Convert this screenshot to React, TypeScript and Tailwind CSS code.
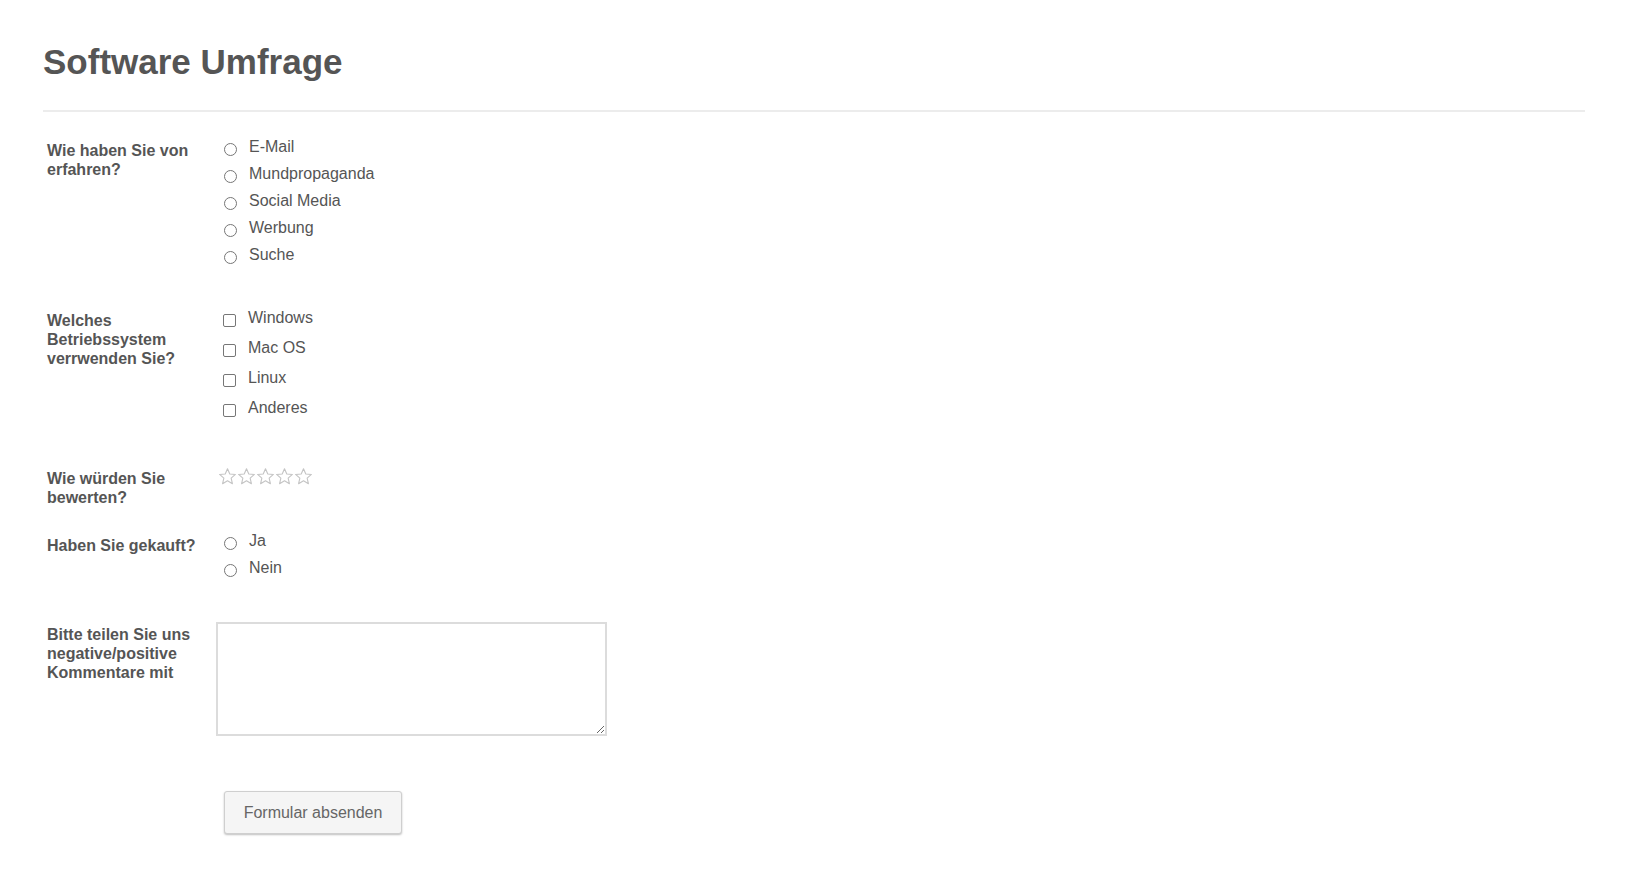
import { useState } from 'react'

const sources = ['E-Mail', 'Mundpropaganda', 'Social Media', 'Werbung', 'Suche']
const systems = ['Windows', 'Mac OS', 'Linux', 'Anderes']

function Radio({ name, label }: { name: string; label: string }) {
  return (
    <label className="flex h-[27px] items-center">
      <input
        type="radio"
        name={name}
        className="mt-[5px] h-[13px] w-[13px] shrink-0 appearance-none rounded-full border border-[#767676] bg-white checked:border-[4px] checked:border-[#1a73e8]"
      />
      <span className="ml-[12px]">{label}</span>
    </label>
  )
}

function Check({ label }: { label: string }) {
  return (
    <label className="flex h-[30px] items-center">
      <input
        type="checkbox"
        className="mt-[6px] h-[13px] w-[13px] shrink-0 appearance-none rounded-[2px] border border-[#767676] bg-white checked:bg-[#1a73e8]"
      />
      <span className="ml-[12px]">{label}</span>
    </label>
  )
}

function Star({ filled, onClick }: { filled: boolean; onClick: () => void }) {
  return (
    <svg width="19" height="19" viewBox="0 0 24 24" onClick={onClick} className="cursor-pointer">
      <path
        d="M12 2.2l2.9 6.6 7.1.6-5.4 4.7 1.6 7-6.2-3.7-6.2 3.7 1.6-7L2 9.4l7.1-.6z"
        fill={filled ? '#f5b301' : '#ffffff'}
        stroke={filled ? '#d89a00' : '#c4c4c4'}
        strokeWidth="1.4"
        strokeLinejoin="round"
      />
    </svg>
  )
}

export default function App() {
  const [rating, setRating] = useState(0)

  return (
    <div className="min-h-screen bg-white px-[43px] pt-[41px] font-['Liberation_Sans',Arial,sans-serif] text-[16px] leading-[19px] text-[#555]">
      <h1 className="text-[35px] font-bold leading-[42px] text-[#555]">Software Umfrage</h1>
      <div className="mt-[27px] border-t-2 border-[#ececec]"></div>

      <form className="pl-[4px]" onSubmit={(e) => e.preventDefault()}>
        <div className="mt-[21px] flex">
          <div className="w-[177px] shrink-0 pt-[8px] pr-[14px] font-bold">Wie haben Sie von erfahren?</div>
          <div>
            {sources.map((s) => (
              <Radio key={s} name="quelle" label={s} />
            ))}
          </div>
        </div>

        <div className="mt-[34px] flex">
          <div className="w-[176px] shrink-0 pt-[9px] pr-[14px] font-bold">Welches Betriebssystem verrwenden Sie?</div>
          <div>
            {systems.map((s) => (
              <Check key={s} label={s} />
            ))}
          </div>
        </div>

        <div className="mt-[45px] flex">
          <div className="w-[171px] shrink-0 pt-[2px] pr-[8px] font-bold">Wie würden Sie bewerten?</div>
          <div className="flex">
            {[1, 2, 3, 4, 5].map((i) => (
              <Star key={i} filled={i <= rating} onClick={() => setRating(i)} />
            ))}
          </div>
        </div>

        <div className="mt-[20px] flex">
          <div className="w-[177px] shrink-0 pt-[9px] font-bold">Haben Sie gekauft?</div>
          <div>
            <Radio name="gekauft" label="Ja" />
            <Radio name="gekauft" label="Nein" />
          </div>
        </div>

        <div className="mt-[41px] flex">
          <div className="w-[169px] shrink-0 pt-[3px] pr-[3px] font-bold">Bitte teilen Sie uns negative/positive Kommentare mit</div>
          <textarea className="h-[114px] w-[391px] border-2 border-[#dcdcdc] bg-white p-1 text-[15px] outline-none"></textarea>
        </div>

        <div className="mt-[55px] pl-[177px]">
          <button
            type="submit"
            className="h-[43px] w-[178px] rounded-[3px] border border-[#cfcfcf] bg-[#f5f5f5] text-[16px] text-[#666] shadow-[0_1px_2px_rgba(0,0,0,0.25)]"
          >
            Formular absenden
          </button>
        </div>
      </form>
    </div>
  )
}
